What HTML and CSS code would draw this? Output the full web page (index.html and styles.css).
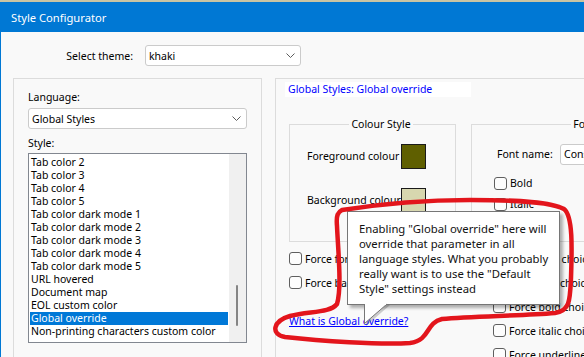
FILE: index.html
```html
<!DOCTYPE html>
<html lang="en">
<head>
    <meta charset="UTF-8">
    <title>Style Configurator</title>
    <link rel="stylesheet" href="styles.css">
</head>
<body>
    <div class="window">
        <div class="titlebar">Style Configurator</div>
        <div class="client">
            <div class="theme-row">
                <span class="theme-label">Select theme:</span>
                <div class="combo theme-combo">
                    <span>khaki</span>
                    <svg class="chevron" width="9" height="5" viewBox="0 0 9 5"><path d="M0.5 0.5 L4.5 4.5 L8.5 0.5"/></svg>
                </div>
            </div>
            <div class="columns">
                <div class="lang-box">
                    <div class="field-label">Language:</div>
                    <div class="combo lang-combo">
                        <span>Global Styles</span>
                        <svg class="chevron" width="9" height="5" viewBox="0 0 9 5"><path d="M0.5 0.5 L4.5 4.5 L8.5 0.5"/></svg>
                    </div>
                    <div class="field-label style-label">Style:</div>
                    <div class="listbox">
                        <ul class="items">
                            <li>Tab color 2</li>
                            <li>Tab color 3</li>
                            <li>Tab color 4</li>
                            <li>Tab color 5</li>
                            <li>Tab color dark mode 1</li>
                            <li>Tab color dark mode 2</li>
                            <li>Tab color dark mode 3</li>
                            <li>Tab color dark mode 4</li>
                            <li>Tab color dark mode 5</li>
                            <li>URL hovered</li>
                            <li>Document map</li>
                            <li>EOL custom color</li>
                            <li class="selected">Global override</li>
                            <li>Non-printing characters custom color</li>
                        </ul>
                        <div class="scrollbar"><div class="thumb"></div></div>
                    </div>
                </div>
                <div class="style-panel">
                    <div class="style-title">Global Styles: Global override</div>
                    <div class="panel-cols">
                        <div class="col-colour">
                            <fieldset class="group colour-group">
                                <legend>Colour Style</legend>
                                <div class="colour-grid">
                                    <span>Foreground colour</span>
                                    <span class="swatch fg"></span>
                                    <span>Background colour</span>
                                    <span class="swatch bg"></span>
                                </div>
                            </fieldset>
                            <div class="checks">
                                <label class="check-row"><span class="box"></span>Force foreground colour</label>
                                <label class="check-row"><span class="box"></span>Force background colour</label>
                            </div>
                            <a href="#" class="help-link">What is Global override?</a>
                        </div>
                        <div class="col-font">
                            <fieldset class="group font-group">
                                <legend>Font Style</legend>
                                <div class="font-name-row">
                                    <span>Font name:</span>
                                    <div class="combo font-combo"><span>Consolas</span></div>
                                </div>
                                <div class="font-checks">
                                    <label class="check-row small"><span class="box"></span>Bold</label>
                                    <label class="check-row small"><span class="box"></span>Italic</label>
                                    <label class="check-row small"><span class="box"></span>Underline</label>
                                </div>
                            </fieldset>
                            <div class="checks right-checks">
                                <label class="check-row"><span class="box"></span>Force font choice</label>
                                <label class="check-row"><span class="box"></span>Force size choice</label>
                                <label class="check-row"><span class="box"></span>Force bold choice</label>
                                <label class="check-row"><span class="box"></span>Force italic choice</label>
                                <label class="check-row"><span class="box"></span>Force underline choice</label>
                            </div>
                        </div>
                    </div>
                </div>
            </div>
        </div>
    </div>

    <div class="tooltip">
        Enabling "Global override" here will<br>
        override that parameter in all<br>
        language styles. What you probably<br>
        really want is to use the "Default<br>
        Style" settings instead
    </div>
    <svg class="tooltip-tail" width="32" height="24" viewBox="0 0 32 24">
        <polygon points="6,1 6,23 30,2" fill="rgba(0,0,0,0.18)"/>
        <path d="M4.5 1 V20.5 L27 1" fill="#fff" stroke="#767676"/>
        <rect x="5" y="0.5" width="21" height="1.5" fill="#fff"/>
    </svg>

    <svg class="scribble" width="584" height="357" viewBox="0 0 584 357">
        <path d="M342 210 C380 204 420 200 470 200 C520 200 552 202 564 209 C573 216 572 248 571 278 C570 300 570 311 555 313 C520 316 472 316 442 319 C425 323 431 340 410 343 C380 345 320 341 285 337 C270 334 273 321 290 316 C310 311 330 313 337 304 C342 288 338 250 337 226 C336 215 338 212 342 210 Z"/>
    </svg>
</body>
</html>
```

FILE: styles.css
```css
* {
    box-sizing: border-box;
}
body {
    margin: 0;
    height: 357px;
    overflow: hidden;
    background-color: #c9c4a3;
    font-family: "Noto Sans", sans-serif;
    font-size: 10.5px;
    color: #000;
    white-space: nowrap;
}
.window {
    margin-top: 2px;
    width: 760px;
    height: 355px;
    border-left: 1px solid #0078d4;
    background-color: #f9f9f9;
}
.titlebar {
    height: 30px;
    margin-left: -1px;
    padding-left: 11px;
    display: flex;
    align-items: center;
    background-color: #0078d4;
    color: #fff;
    font-size: 11.2px;
}
.client {
    padding: 13px 0 0 12px;
}
.theme-row {
    display: flex;
    align-items: center;
    height: 21px;
}
.theme-label {
    width: 120px;
    margin-right: 12px;
    text-align: right;
}
.combo {
    display: flex;
    align-items: center;
    justify-content: space-between;
    height: 21px;
    padding: 0 5px 0 3px;
    background-color: #fff;
    border: 1px solid #cbcbcb;
    border-radius: 3px;
}
.chevron path {
    fill: none;
    stroke: #5c5c5c;
}
.theme-combo {
    width: 156px;
}
.columns {
    display: flex;
    gap: 13px;
    margin-top: 12px;
}
.lang-box {
    width: 249px;
    height: 280px;
    padding: 11px 14px 0;
    border: 1px solid #dcdcdc;
    border-bottom: none;
}
.field-label {
    line-height: 15px;
}
.lang-combo {
    margin-top: 3px;
}
.style-label {
    margin-top: 7px;
}
.listbox {
    display: flex;
    height: 190px;
    margin-top: 2px;
    background-color: #fff;
    border: 1px solid #828790;
}
.items {
    list-style: none;
    width: 198px;
    margin: 0 1px;
    padding: 2px 0 0;
    overflow: hidden;
}
.items li {
    height: 13px;
    line-height: 13px;
    padding-left: 1px;
}
.items li.selected {
    background-color: #0078d7;
    color: #fff;
}
.scrollbar {
    width: 17px;
    padding: 131px 0 0 7px;
    background-color: #f0f0f0;
}
.thumb {
    width: 2px;
    height: 41px;
    border-radius: 1px;
    background-color: #858585;
}
.style-panel {
    flex: 1;
    height: 280px;
    border-top: 1px solid #dcdcdc;
    border-left: 1px solid #dcdcdc;
}
.style-title {
    width: 186px;
    height: 15px;
    margin: 3px 0 0 9px;
    padding-left: 3px;
    line-height: 15px;
    background-color: #fff;
    color: #0000ff;
}
.panel-cols {
    display: flex;
    gap: 15px;
    margin: 20px 0 0 13px;
}
.col-colour {
    width: 167px;
    flex-shrink: 0;
}
.col-font {
    width: 228px;
    flex-shrink: 0;
}
.group {
    margin: 0;
    min-width: 0;
    border: 1px solid #dcdcdc;
}
.group legend {
    margin: 0 auto;
    padding: 0 2px;
    line-height: 15px;
}
.colour-group {
    padding: 11.5px 0 28px 17px;
}
.colour-grid {
    display: grid;
    grid-template-columns: 88px 25px;
    column-gap: 6px;
    row-gap: 19px;
    align-items: center;
}
.swatch {
    width: 25px;
    height: 25px;
    border: 1px solid #1a1a1a;
}
.swatch.fg {
    background-color: #5f5f00;
}
.swatch.bg {
    background-color: #d7d7af;
}
.checks {
    margin-top: 5px;
}
.check-row {
    display: flex;
    align-items: center;
    gap: 3px;
    height: 24px;
}
.check-row.small {
    height: 21px;
}
.box {
    width: 13px;
    height: 13px;
    flex-shrink: 0;
    background-color: #fdfdfd;
    border: 1px solid #5f5f5f;
    border-radius: 3px;
}
.help-link {
    display: block;
    margin-top: 19px;
    line-height: 15px;
    color: #0000ff;
    text-decoration: underline;
}
.font-group {
    padding: 11.5px 0 5px 25px;
}
.font-name-row {
    display: grid;
    grid-template-columns: 63px 1fr;
    align-items: center;
}
.font-combo {
    justify-content: flex-start;
}
.font-checks {
    margin: 8px 0 0 -3px;
}
.right-checks {
    padding-left: 22px;
}
.tooltip {
    position: absolute;
    left: 347px;
    top: 211px;
    width: 213px;
    height: 94px;
    padding: 9px 0 0 11px;
    font-size: 11.3px;
    line-height: 15px;
    background-color: #fff;
    border: 1px solid #767676;
    box-shadow: 3px 3px 3px rgba(0, 0, 0, 0.3);
    color: #111;
}
.tooltip-tail {
    position: absolute;
    left: 360px;
    top: 303px;
}
.scribble {
    position: absolute;
    left: 0;
    top: 0;
    pointer-events: none;
}
.scribble path {
    fill: none;
    stroke: #e3151c;
    stroke-width: 4.5;
    stroke-linecap: round;
    stroke-linejoin: round;
}
```
